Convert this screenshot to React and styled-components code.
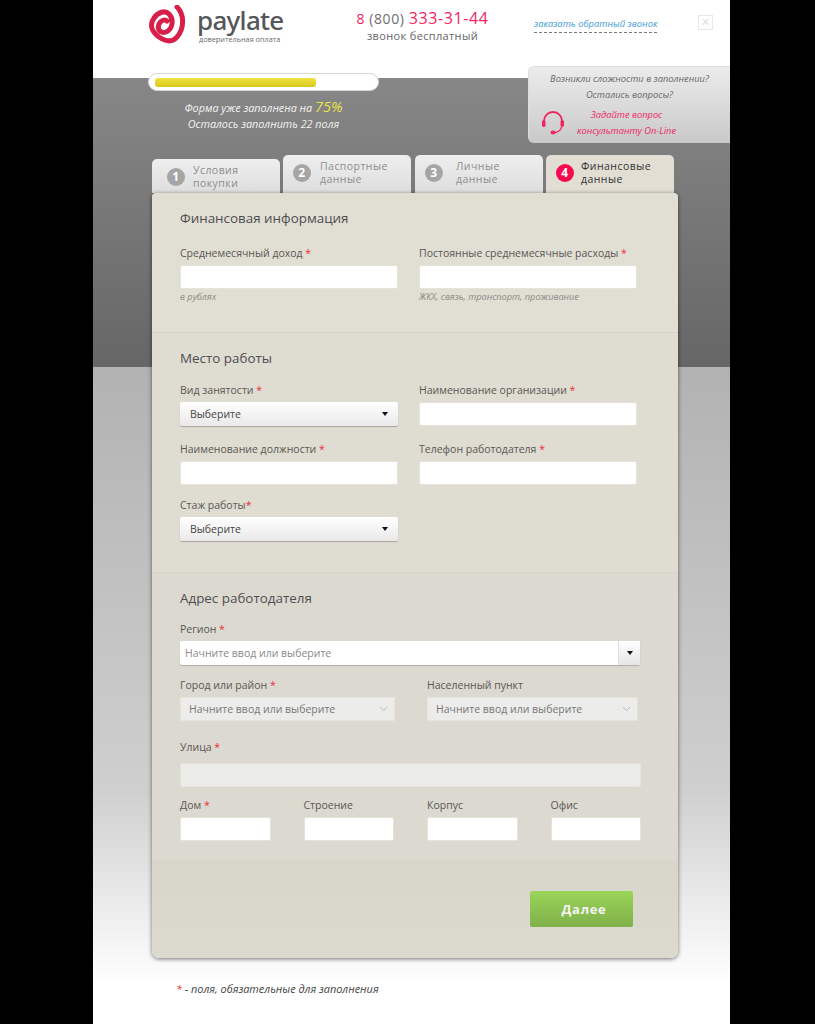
import styled, { createGlobalStyle } from "styled-components";

const Global = createGlobalStyle`
  html, body {
    margin: 0;
    padding: 0;
    background: #000;
  }
  * {
    box-sizing: border-box;
  }
`;

const Page = styled.div`
  position: relative;
  width: 637px;
  height: 1024px;
  margin-left: 93px;
  overflow: hidden;
  font-family: "Open Sans", "Noto Sans", sans-serif;
  color: #55534f;
  background: linear-gradient(
    to bottom,
    #fff 0,
    #fff 78px,
    #878787 78px,
    #666 367px,
    #b2b2b2 367px,
    #cfcfcf 790px,
    #fff 985px
  );
`;

const Header = styled.header`
  display: flex;
  height: 66px;
  padding-left: 55px;
`;

const Logo = styled.div`
  display: flex;
  gap: 11px;
  width: 184px;
  padding-top: 5px;
`;

const LogoText = styled.div`
  padding-top: 0;
`;

const Brand = styled.div`
  font-family: "Noto Sans", sans-serif;
  font-size: 26px;
  font-weight: 500;
  line-height: 30px;
  letter-spacing: -0.7px;
  color: #54565a;
`;

const Slogan = styled.div`
  margin-left: 2px;
  font-size: 7.3px;
  line-height: 9px;
  color: #6a6a6a;
`;

const Phone = styled.div`
  width: 181px;
  padding-top: 8px;
  text-align: center;
`;

const PhoneNumber = styled.div`
  font-size: 14px;
  line-height: 20px;
  letter-spacing: 0.6px;
  color: #6e6e6e;
  b {
    font-weight: 400;
    color: #f0245f;
  }
  b + b {
    font-size: 16px;
  }
`;

const PhoneNote = styled.div`
  font-size: 11px;
  line-height: 13px;
  letter-spacing: 0.35px;
  color: #666;
`;

const Callback = styled.a`
  align-self: flex-start;
  margin-top: 17px;
  margin-left: 21px;
  padding-bottom: 1px;
  font-size: 9.4px;
  font-style: italic;
  line-height: 14px;
  color: #3f9bd5;
  border-bottom: 1px dashed #777;
  white-space: nowrap;
`;

const CloseBox = styled.div`
  position: absolute;
  top: 15px;
  left: 605px;
  width: 15px;
  height: 15px;
  border: 1px solid #e8e8e8;
  color: #dcdcdc;
  font-size: 14px;
  line-height: 12px;
  text-align: center;
`;

const StatusRow = styled.div`
  display: flex;
  justify-content: space-between;
  height: 89px;
`;

const Progress = styled.div`
  width: 231px;
  margin-left: 55px;
  padding-top: 7px;
`;

const Track = styled.div`
  height: 18px;
  padding: 4px 6px;
  background: #fff;
  border: 1px solid #d6d6d6;
  border-radius: 9px;
`;

const Bar = styled.div`
  height: 9px;
  border-radius: 3px;
  background: linear-gradient(to bottom, #f0e443, #d6c81a);
`;

const ProgressText = styled.div`
  margin-top: 8px;
  font-size: 10.8px;
  font-style: italic;
  line-height: 16px;
  text-align: center;
  color: #f4f4f4;
  b {
    font-size: 14.5px;
    font-weight: 400;
    color: #e9e548;
  }
`;

const Help = styled.div`
  width: 202px;
  height: 77px;
  padding-top: 4px;
  font-size: 9.3px;
  font-style: italic;
  line-height: 16px;
  text-align: center;
  color: #666;
  background: linear-gradient(to bottom, #ececec, #c9c9c9);
  border-top: 1px solid #ddd;
  border-left: 1px solid #ddd;
  border-radius: 6px 0 0 6px;
`;

const HelpRow = styled.div`
  display: flex;
  align-items: center;
  gap: 12px;
  margin-top: 4px;
  padding-left: 12px;
  color: #f0245f;
`;

const Tabs = styled.div`
  display: flex;
  align-items: flex-end;
  height: 38px;
  padding-left: 59px;
  gap: 3px;
`;

const Tab = styled.div`
  display: flex;
  align-items: flex-start;
  gap: ${(p) => p.$textGap}px;
  width: 128px;
  height: ${(p) => (p.$low ? "34px" : "38px")};
  padding: ${(p) => (p.$low ? "5px 0 0 15px" : "5px 0 0 10px")};
  margin-right: ${(p) => (p.$wide ? "1px" : "0")};
  font-size: 10.5px;
  line-height: 13px;
  letter-spacing: 0.45px;
  color: ${(p) => (p.$active ? "#333" : "#8d8d8d")};
  background: ${(p) =>
    p.$active ? "#e2ded4" : "linear-gradient(to bottom, #eeeeee, #dedede)"};
  border-radius: 5px 5px 0 0;
`;

const TabNum = styled.span`
  flex: none;
  width: 18px;
  height: 18px;
  margin-top: 4px;
  border-radius: 50%;
  font-size: 12px;
  font-weight: 700;
  line-height: 18px;
  text-align: center;
  color: #fff;
  background: ${(p) => (p.$active ? "#f5094f" : "#a5a5a5")};
`;

const Card = styled.form`
  position: relative;
  width: 526px;
  margin-left: 59px;
  border-radius: 4px 4px 7px 7px;
  box-shadow: 0 1px 4px rgba(0, 0, 0, 0.55);
  overflow: hidden;
`;

const Section = styled.section`
  height: ${(p) => p.$h}px;
  padding: 17px 28px 0;
  background: ${(p) => p.$bg};
  border-bottom: ${(p) => (p.$last ? "none" : "1px solid #d6d3ca")};
`;

const Title = styled.h2`
  margin: 0;
  font-size: 13.4px;
  font-weight: 400;
  line-height: 17px;
  color: #4e4e50;
`;

const Row = styled.div`
  display: flex;
  gap: ${(p) => p.$gap ?? 21}px;
  margin-top: ${(p) => p.$mt ?? 0}px;
`;

const Field = styled.div`
  width: ${(p) => p.$w ?? 218}px;
`;

const Label = styled.div`
  font-size: 10.5px;
  line-height: 14px;
  height: ${(p) => p.$h ?? 19}px;
  white-space: nowrap;
  color: #5a5854;
  i {
    font-style: normal;
    color: #ec2b3a;
  }
`;

const Input = styled.div`
  height: 24px;
  background: ${(p) => (p.$disabled ? "#ececea" : "#fff")};
  border: 1px solid #e6e3db;
  border-radius: 2px;
`;

const Hint = styled.div`
  margin-top: 2px;
  font-size: 9.2px;
  font-style: italic;
  line-height: 12px;
  color: #8b8a85;
`;

const SelectBox = styled.div`
  display: flex;
  align-items: center;
  justify-content: space-between;
  height: 24px;
  padding: 0 10px 0 10px;
  font-size: 10.5px;
  color: #444;
  background: linear-gradient(to bottom, #fff, #e9e9e9);
  border-radius: 2px;
  box-shadow: 0 1px 1px rgba(0, 0, 0, 0.25);
`;

const Caret = styled.span`
  width: 0;
  height: 0;
  border-left: 3.5px solid transparent;
  border-right: 3.5px solid transparent;
  border-top: 4px solid #111;
`;

const Combo = styled.div`
  display: flex;
  width: 460px;
  height: 24px;
  background: #fff;
  border-radius: 2px;
  box-shadow: 0 1px 1px rgba(0, 0, 0, 0.2);
`;

const ComboText = styled.div`
  flex: 1;
  padding-left: 5px;
  font-size: 10.5px;
  line-height: 24px;
  color: #8a8a8a;
`;

const ComboBtn = styled.div`
  display: flex;
  align-items: center;
  justify-content: center;
  width: 22px;
  background: linear-gradient(to bottom, #fff, #e6e6e6);
  border-left: 1px solid #ddd;
`;

const Dropdown = styled.div`
  display: flex;
  align-items: center;
  justify-content: space-between;
  height: 24px;
  padding: 0 6px 0 8px;
  font-size: 10.5px;
  color: #777;
  background: #ececea;
  border: 1px solid #e6e3db;
`;

const Footer = styled.div`
  display: flex;
  justify-content: flex-end;
  padding: 29px 45px 0 0;
`;

const NextButton = styled.button`
  width: 103px;
  height: 36px;
  padding: 0 0 0 5px;
  border: none;
  border-radius: 2px;
  font-family: inherit;
  font-size: 13px;
  font-weight: 700;
  letter-spacing: 0.7px;
  color: #f4f4f4;
  background: linear-gradient(to bottom, #9ad558, #7fb04a);
`;

const Note = styled.div`
  margin: 24px 0 0 83px;
  font-size: 10.9px;
  font-style: italic;
  line-height: 14px;
  color: #444;
  i {
    color: #ec2b3a;
  }
`;

const Req = () => <i> *</i>;

const SpiralLogo = () => (
  <svg width="38" height="40" viewBox="0 0 38 40" fill="none">
    <path
      d="M29 2 C37 10 36 24 29 32 C24 38 17 36 11 32 C4 27 1 20 6 13 C10 7 17 5 21 9 C26 14 25 24 18 27 C12 29 9 24 11 19 C13 15 17 14 19 16"
      stroke="#d81f4a"
      strokeWidth="5"
      strokeLinecap="round"
    />
  </svg>
);

const Headset = () => (
  <svg width="24" height="24" viewBox="0 0 24 24" fill="none">
    <path d="M3 12 V10 A9 9 0 0 1 21 10 V12" stroke="#f0245f" strokeWidth="1.8" />
    <rect x="1" y="9" width="3.5" height="7" rx="1.7" fill="#f0245f" />
    <rect x="19.5" y="9" width="3.5" height="7" rx="1.7" fill="#f0245f" />
    <path d="M20.5 16 C20 19 17 21 14 21.5" stroke="#f0245f" strokeWidth="1.4" />
    <ellipse cx="12" cy="21.5" rx="2.5" ry="2" fill="#f0245f" />
  </svg>
);

const Chevron = () => (
  <svg width="9" height="6" viewBox="0 0 9 6" fill="none">
    <path d="M1 1 L4.5 4.5 L8 1" stroke="#bbb" strokeWidth="1" />
  </svg>
);

const App = () => {
  return (
    <Page>
      <Global />
      <Header>
        <Logo>
          <SpiralLogo />
          <LogoText>
            <Brand>paylate</Brand>
            <Slogan>доверительная оплата</Slogan>
          </LogoText>
        </Logo>
        <Phone>
          <PhoneNumber>
            <b>8</b> (800) <b>333-31-44</b>
          </PhoneNumber>
          <PhoneNote>звонок бесплатный</PhoneNote>
        </Phone>
        <Callback>заказать обратный звонок</Callback>
        <CloseBox>×</CloseBox>
      </Header>

      <StatusRow>
        <Progress>
          <Track>
            <Bar style={{ width: "74%" }} />
          </Track>
          <ProgressText>
            Форма уже заполнена на <b>75%</b>
            <br />
            Осталось заполнить 22 поля
          </ProgressText>
        </Progress>
        <Help>
          Возникли сложности в заполнении?
          <br />
          Остались вопросы?
          <HelpRow>
            <Headset />
            <div>
              Задайте вопрос
              <br />
              консультанту On-Line
            </div>
          </HelpRow>
        </Help>
      </StatusRow>

      <Tabs>
        <Tab $low $textGap={8}>
          <TabNum>1</TabNum>
          <div>
            Условия
            <br />
            покупки
          </div>
        </Tab>
        <Tab $wide $textGap={9}>
          <TabNum>2</TabNum>
          <div>
            Паспортные
            <br />
            данные
          </div>
        </Tab>
        <Tab $textGap={13}>
          <TabNum>3</TabNum>
          <div>
            Личные
            <br />
            данные
          </div>
        </Tab>
        <Tab $active $textGap={7}>
          <TabNum $active>4</TabNum>
          <div>
            Финансовые
            <br />
            данные
          </div>
        </Tab>
      </Tabs>

      <Card>
        <Section $h={140} $bg="#e1ded4">
          <Title>Финансовая информация</Title>
          <Row $mt={19}>
            <Field>
              <Label>
                Среднемесячный доход
                <Req />
              </Label>
              <Input />
              <Hint>в рублях</Hint>
            </Field>
            <Field>
              <Label>
                Постоянные среднемесячные расходы
                <Req />
              </Label>
              <Input />
              <Hint>ЖКХ, связь, транспорт, проживание</Hint>
            </Field>
          </Row>
        </Section>

        <Section $h={240} $bg="#dfdcd2">
          <Title>Место работы</Title>
          <Row $mt={16}>
            <Field>
              <Label>
                Вид занятости
                <Req />
              </Label>
              <SelectBox>
                Выберите
                <Caret />
              </SelectBox>
            </Field>
            <Field>
              <Label>
                Наименование организации
                <Req />
              </Label>
              <Input />
            </Field>
          </Row>
          <Row $mt={16}>
            <Field>
              <Label>
                Наименование должности
                <Req />
              </Label>
              <Input />
            </Field>
            <Field>
              <Label>
                Телефон работодателя
                <Req />
              </Label>
              <Input />
            </Field>
          </Row>
          <Row $mt={13}>
            <Field>
              <Label>
                Стаж работы<i>*</i>
              </Label>
              <SelectBox>
                Выберите
                <Caret />
              </SelectBox>
            </Field>
          </Row>
        </Section>

        <Section $h={289} $bg="#dcd9d0">
          <Title>Адрес работодателя</Title>
          <Row $mt={15}>
            <Field $w={460}>
              <Label>
                Регион
                <Req />
              </Label>
              <Combo>
                <ComboText>Начните ввод или выберите</ComboText>
                <ComboBtn>
                  <Caret />
                </ComboBtn>
              </Combo>
            </Field>
          </Row>
          <Row $mt={13} $gap={32}>
            <Field $w={215}>
              <Label>
                Город или район
                <Req />
              </Label>
              <Dropdown>
                Начните ввод или выберите
                <Chevron />
              </Dropdown>
            </Field>
            <Field $w={211}>
              <Label>Населенный пункт</Label>
              <Dropdown>
                Начните ввод или выберите
                <Chevron />
              </Dropdown>
            </Field>
          </Row>
          <Row $mt={19}>
            <Field $w={461}>
              <Label $h={23}>
                Улица
                <Req />
              </Label>
              <Input $disabled />
            </Field>
          </Row>
          <Row $mt={11} $gap={33}>
            <Field $w={90.5}>
              <Label>
                Дом
                <Req />
              </Label>
              <Input />
            </Field>
            <Field $w={90.5}>
              <Label>Строение</Label>
              <Input />
            </Field>
            <Field $w={90.5}>
              <Label>Корпус</Label>
              <Input />
            </Field>
            <Field $w={90.5}>
              <Label>Офис</Label>
              <Input />
            </Field>
          </Row>
        </Section>

        <Section $h={96} $bg="linear-gradient(to bottom, #d8d5cb, #dcd9cf)" $last style={{ padding: 0 }}>
          <Footer>
            <NextButton type="button">Далее</NextButton>
          </Footer>
        </Section>
      </Card>

      <Note>
        <i>*</i> - поля, обязательные для заполнения
      </Note>
    </Page>
  );
};

export default App;
